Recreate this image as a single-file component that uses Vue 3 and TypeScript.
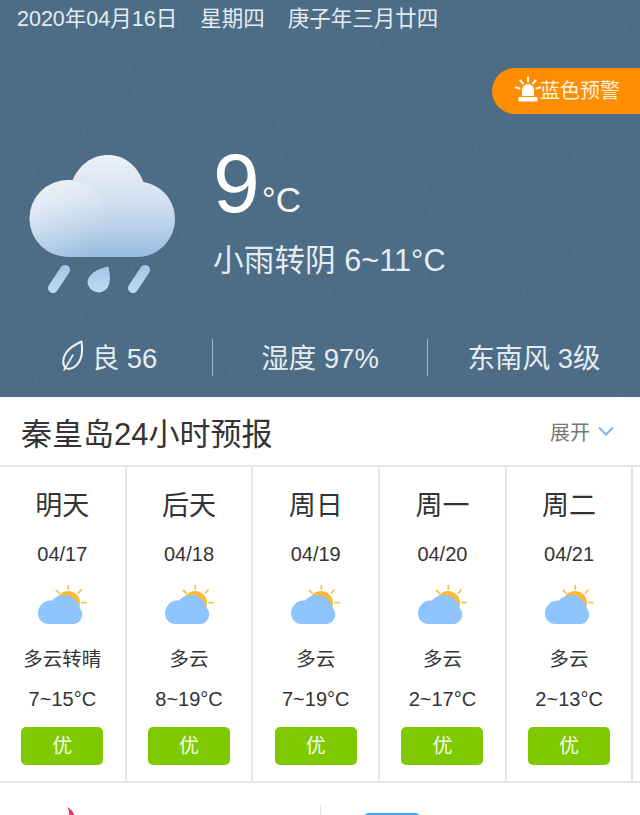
<script setup lang="ts">
interface Day {
  name: string
  date: string
  desc: string
  temp: string
}

const days: Day[] = [
  { name: "明天", date: "04/17", desc: "多云转晴", temp: "7~15°C" },
  { name: "后天", date: "04/18", desc: "多云", temp: "8~19°C" },
  { name: "周日", date: "04/19", desc: "多云", temp: "7~19°C" },
  { name: "周一", date: "04/20", desc: "多云", temp: "2~17°C" },
  { name: "周二", date: "04/21", desc: "多云", temp: "2~13°C" },
]

// faint rain streaks behind the hero, same positions every time
const streaks = Array.from({ length: 70 }, (_, i) => ({
  x: (i * 197 + 31) % 640,
  y: (i * 113 + 47) % 390,
  h: 6 + (i * 7) % 14,
}))
</script>

<template>
  <div class="page">
    <section class="hero">
      <svg class="rain" width="640" height="397" aria-hidden="true">
        <line
          v-for="(s, i) in streaks"
          :key="i"
          :x1="s.x"
          :y1="s.y"
          :x2="s.x"
          :y2="s.y + s.h"
          stroke="#8fb0c6"
          stroke-opacity="0.07"
          stroke-width="2"
        />
      </svg>

      <div class="date-row">
        <span>2020年04月16日</span>
        <span>星期四</span>
        <span>庚子年三月廿四</span>
      </div>

      <div class="alert">
        <svg width="26" height="28" viewBox="0 0 26 28">
          <path d="M7 20v-6a6 6 0 0 1 12 0v6z" fill="#fff" />
          <rect x="3.500" y="21" width="19" height="4.500" rx="1" fill="#fff" />
          <path
            d="M13 1.500v4M5.500 4.500l2.500 3M20.500 4.500l-2.500 3M1 11.500l3.500 1M25 11.500l-3.500 1"
            stroke="#fff"
            stroke-width="2"
            stroke-linecap="round"
          />
        </svg>
        <span class="alert-text">蓝色预警</span>
      </div>

      <div class="now">
        <svg class="big-icon" width="184" height="160" viewBox="29 145 184 160">
          <defs>
            <linearGradient id="cloudFill" gradientUnits="userSpaceOnUse" x1="0" y1="155" x2="0" y2="257">
              <stop offset="0" stop-color="#ecf1f8" />
              <stop offset="0.45" stop-color="#d3e0ef" />
              <stop offset="1" stop-color="#99bde0" />
            </linearGradient>
            <linearGradient id="cloudSide" gradientUnits="userSpaceOnUse" x1="60" y1="185" x2="108" y2="235">
              <stop offset="0" stop-color="#f1f5fa" stop-opacity="0.55" />
              <stop offset="1" stop-color="#dfe9f4" stop-opacity="0" />
            </linearGradient>
            <linearGradient id="dropFill" gradientUnits="userSpaceOnUse" x1="0" y1="266" x2="0" y2="295">
              <stop offset="0" stop-color="#a3c6e8" />
              <stop offset="1" stop-color="#c4daf0" />
            </linearGradient>
          </defs>
          <path
            d="M68 257a38.500 38.500 0 0 1 0-77c1.500 0 3 0 4.500 0.300C79 165 92 155 108 155c16 0 29 10 35.500 27 18 3 31.500 18 31.500 37 0 21-17 38-38 38z"
            fill="url(#cloudFill)"
          />
          <path
            d="M68 257a38.500 38.500 0 0 1 0-77c20 0 37 15 38 38l-1 39z"
            fill="url(#cloudSide)"
          />
          <path
            d="M65 270 53 288M145 270 133 288"
            stroke="url(#dropFill)"
            stroke-width="10"
            stroke-linecap="round"
          />
          <path
            d="M108.500 266.500c1.500 9 2 13 0.500 18a11 11 0 0 1-21.500-2c0-8 10-14 21-16z"
            fill="url(#dropFill)"
          />
        </svg>
        <div class="now-text">
          <div class="temp"><span class="temp-num">9</span><span class="temp-unit">°C</span></div>
          <div class="summary">小雨转阴 6~11°C</div>
        </div>
      </div>

      <div class="stats">
        <div class="stat">
          <svg width="22" height="32" viewBox="0 0 22 32">
            <path
              d="M20.500 1.500C21.500 10 22 20 14 26.500c-3 2.500-7 3-9 1.500C1.500 25 1 19 5 13c3.500-5.500 10-9 15.500-11.500z"
              fill="none"
              stroke="#eef3f7"
              stroke-width="2"
              stroke-linejoin="round"
            />
            <path d="M3 30 12 15" fill="none" stroke="#eef3f7" stroke-width="1.500" stroke-linecap="round" />
          </svg>
          <span>良 56</span>
        </div>
        <div class="stat">湿度 97%</div>
        <div class="stat">东南风 3级</div>
      </div>
    </section>

    <header class="section-head">
      <h2>秦皇岛24小时预报</h2>
      <div class="expand">
        <span>展开</span>
        <svg width="16" height="10" viewBox="0 0 16 10">
          <path d="M1 1.500 8 8.500 15 1.500" fill="none" stroke="#7db3ec" stroke-width="2" />
        </svg>
      </div>
    </header>

    <div class="forecast">
      <div v-for="d in days" :key="d.date" class="day">
        <div class="day-name">{{ d.name }}</div>
        <div class="day-date">{{ d.date }}</div>
        <svg class="day-icon" width="50" height="40" viewBox="0 0 50 40">
          <circle cx="30" cy="18" r="12" fill="#fbb936" />
          <path
            d="M30.300 0.500v3.500M18.500 5.500l2.500 2.500M43 5l-2.500 3M44 17.700h4"
            stroke="#f6c25c"
            stroke-width="1.800"
            stroke-linecap="round"
          />
          <path
            d="M10.500 39H34.500A9.500 9.500 0 0 0 42 23.500C40 15 33 10 26 10 21 10 16.500 12.500 14 15.500 6 14.500 0 21 0 28.500 0 34.500 4.500 39 10.500 39z"
            fill="#8fc5ff"
          />
        </svg>
        <div class="day-desc">{{ d.desc }}</div>
        <div class="day-temp">{{ d.temp }}</div>
        <div class="aqi">优</div>
      </div>
    </div>

    <div class="bottom">
      <div class="bottom-cell">
        <svg class="flame" width="12" height="10" viewBox="0 0 12 10">
          <path d="M2 0C6 2 9 5 10 10H3C5 6 4 3 2 0z" fill="#ef3a55" />
        </svg>
      </div>
      <div class="bottom-cell right">
        <div class="blue-bar"></div>
      </div>
    </div>
  </div>
</template>

<style scoped>
.page {
  width: 640px;
  height: 815px;
  overflow: hidden;
  background: #fff;
  font-family: "Liberation Sans", "Noto Sans CJK SC", sans-serif;
}

.hero {
  position: relative;
  height: 397px;
  background: #4c6d85;
  color: #e4ecf2;
}
.rain {
  position: absolute;
  left: 0;
  top: 0;
}

.date-row {
  position: relative;
  display: flex;
  gap: 23px;
  padding: 5px 0 0 17px;
  height: 33px;
  box-sizing: border-box;
  font-size: 21.500px;
  line-height: 28px;
}

.alert {
  position: absolute;
  right: 0;
  top: 68px;
  width: 148px;
  height: 46px;
  box-sizing: border-box;
  padding: 0 0 3px 23px;
  display: flex;
  align-items: center;
  border-radius: 23px 0 0 23px;
  background: #ff8d00;
  color: #fff3e0;
  font-size: 20px;
}
.alert-text {
  margin-left: -1px;
}

.now {
  position: relative;
  display: flex;
  padding: 112px 0 0 29px;
}
.big-icon {
  flex: none;
}
.now-text {
  margin-top: 2px;
}
.temp {
  display: flex;
  align-items: baseline;
  height: 72px;
  color: #fff;
}
.temp-num {
  font-size: 84px;
  line-height: 72px;
}
.temp-unit {
  margin-left: 2px;
  font-size: 35px;
  color: #f1f5f8;
}
.summary {
  margin-top: 22px;
  font-size: 30.700px;
  line-height: 40px;
  white-space: nowrap;
}

.stats {
  position: absolute;
  left: 0;
  right: 0;
  top: 339px;
  display: grid;
  grid-template-columns: 212px 215px 213px;
}
.stat {
  display: flex;
  align-items: center;
  justify-content: center;
  gap: 9px;
  height: 37px;
  padding-bottom: 3px;
  box-sizing: border-box;
  font-size: 27.500px;
  white-space: nowrap;
}
.stat + .stat {
  border-left: 1px solid #9eb2c1;
}
.stat:first-child {
  padding-left: 6px;
}

.section-head {
  display: flex;
  align-items: center;
  justify-content: space-between;
  height: 70px;
  box-sizing: border-box;
  padding: 0 26px 0 21px;
  border-bottom: 2px solid #e6e6e6;
}
.section-head h2 {
  margin: 0;
  font-size: 31px;
  font-weight: 400;
  color: #333;
}
.expand {
  display: flex;
  align-items: center;
  gap: 8px;
  font-size: 20px;
  color: #777;
}

.forecast {
  display: grid;
  grid-template-columns: repeat(5, 126.700px) 1fr;
  height: 316px;
  border-bottom: 2px solid #e6e6e6;
  box-sizing: border-box;
}
.day {
  display: flex;
  flex-direction: column;
  align-items: center;
  border-right: 2px solid #e6e6e6;
  color: #333;
}
.day-name {
  margin-top: 20px;
  font-size: 27px;
  line-height: 38px;
}
.day-date {
  margin-top: 17px;
  font-size: 20px;
  line-height: 24px;
}
.day-icon {
  margin-top: 19px;
  margin-left: 1px;
}
.day-desc {
  margin-top: 19px;
  font-size: 19.500px;
  line-height: 30px;
}
.day-temp {
  margin-top: 10px;
  font-size: 20px;
  line-height: 30px;
}
.aqi {
  margin-top: 13px;
  width: 82px;
  height: 38px;
  border-radius: 5px;
  background: #7fc900;
  color: #f2fbe4;
  font-size: 20px;
  line-height: 38px;
  text-align: center;
}

.bottom {
  display: flex;
  height: 32px;
}
.bottom-cell {
  flex: 1;
  position: relative;
  height: 32px;
}
.bottom-cell.right {
  margin-top: 22px;
  border-left: 1px solid #e6e6e6;
}
.flame {
  position: absolute;
  left: 65px;
  top: 24px;
}
.blue-bar {
  margin-left: 43px;
  margin-top: 8px;
  width: 56px;
  height: 6px;
  border-radius: 5px 5px 0 0;
  background: #3fa4f2;
}
</style>
